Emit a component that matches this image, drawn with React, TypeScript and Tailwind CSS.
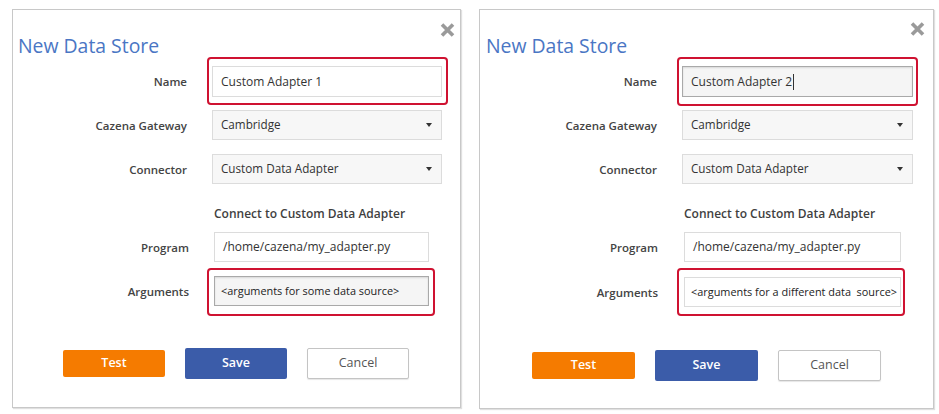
import React from "react";

type Cfg = {
  outer: string;
  titlePl: string;
  labelW: string;
  gap: string;
  inputW: string;
  progLabelW: string;
  progGap: string;
  progInputW: string;
  headingPl: string;
  argsMt: string;
  btnMt: string;
  btnPl: string;
  btnW: string;
  closePos: string;
  nameRed: string;
  argsRed: string;
  nameFocused: boolean;
  argsFocused: boolean;
  name: string;
  args: string;
};

const cfg1: Cfg = {
  outer: "w-[449px] h-[399px]",
  titlePl: "pl-[5px]",
  labelW: "w-[174px]",
  gap: "ml-[25px]",
  inputW: "w-[230px]",
  progLabelW: "w-[176px]",
  progGap: "ml-[25px]",
  progInputW: "w-[215px]",
  headingPl: "pl-[201px]",
  argsMt: "mt-[14px]",
  btnMt: "mt-[42px]",
  btnPl: "pl-[50px]",
  btnW: "w-[102px]",
  closePos: "right-[5px] top-[13px]",
  nameRed: "-left-[5px] -right-[6px] -top-[9px] -bottom-[8px]",
  argsRed: "-left-[7px] -right-[6px] -top-[8px] -bottom-[10px]",
  nameFocused: false,
  argsFocused: true,
  name: "Custom Adapter 1",
  args: "<arguments for some data source>",
};

const cfg2: Cfg = {
  outer: "w-[455px] h-[400px]",
  titlePl: "pl-[6px]",
  labelW: "w-[177px]",
  gap: "ml-[25px]",
  inputW: "w-[231px]",
  progLabelW: "w-[178px]",
  progGap: "ml-[26px]",
  progInputW: "w-[217px]",
  headingPl: "pl-[204px]",
  argsMt: "mt-[15px]",
  btnMt: "mt-[43px]",
  btnPl: "pl-[52px]",
  btnW: "w-[103px]",
  closePos: "right-[8px] top-[12px]",
  nameRed: "-left-[5px] -right-[5px] -top-[9px] -bottom-[9px]",
  argsRed: "-left-[7px] -right-[4px] -top-[9px] -bottom-[9px]",
  nameFocused: true,
  argsFocused: false,
  name: "Custom Adapter 2",
  args: "<arguments for a different data\u00a0 source>",
};

function Caret() {
  return (
    <span className="absolute right-[9px] top-1/2 -translate-y-1/2 w-0 h-0 border-l-[3px] border-r-[3px] border-t-[4px] border-l-transparent border-r-transparent border-t-[#333333]" />
  );
}

function Label({ w, children }: { w: string; children: React.ReactNode }) {
  return (
    <div className={`${w} text-right text-[11.5px] font-semibold text-[#444444] leading-[17px]`}>
      {children}
    </div>
  );
}

function Panel({ c }: { c: Cfg }) {
  const plainInput =
    "h-full w-full flex items-center border border-[#dcdcdc] bg-white text-[12px] text-[#333333]";
  const focusedInput =
    "h-full w-full flex items-center border border-[#a9a9a9] bg-[#f5f5f5] shadow-[inset_0_1px_2px_rgba(0,0,0,0.12)] text-[12px] text-[#333333]";
  const selectBox =
    "relative h-full w-full flex items-center border border-[#dcdcdc] bg-[#f7f7f7] text-[11.7px] text-[#333333] pl-[8px]";
  return (
    <div
      className={`relative ${c.outer} shrink-0 border border-[#c8c8c8] bg-white shadow-[1px_1px_1px_rgba(0,0,0,0.12)] flex flex-col`}
    >
      <div className={`absolute ${c.closePos}`}>
        <svg width="15" height="14" viewBox="0 0 15 14">
          <path d="M2 1.5 L13 12.5 M13 1.5 L2 12.5" stroke="#9a9a9a" strokeWidth="3.6" strokeLinecap="butt" />
        </svg>
      </div>

      <div className={`mt-[22px] ${c.titlePl} text-[19.4px] leading-[28px] text-[#4a76c4]`}>New Data Store</div>

      {/* Name */}
      <div className="mt-[6px] flex items-center h-[31px]">
        <Label w={c.labelW}>Name</Label>
        <div className={`${c.gap} ${c.inputW} h-full relative`}>
          <div className={`${c.nameFocused ? focusedInput : plainInput} pl-[8px]`}>
            <span>{c.name}</span>
            {c.nameFocused && <span className="inline-block w-px h-[16px] bg-[#333333] ml-[1px]" />}
          </div>
          <div className={`absolute ${c.nameRed} border-2 border-[#cf1231] rounded-[4px] pointer-events-none`} />
        </div>
      </div>

      {/* Gateway */}
      <div className="mt-[13px] flex items-center h-[30px]">
        <Label w={c.labelW}>Cazena Gateway</Label>
        <div className={`${c.gap} ${c.inputW} h-full`}>
          <div className={selectBox}>
            Cambridge
            <Caret />
          </div>
        </div>
      </div>

      {/* Connector */}
      <div className="mt-[14px] flex items-center h-[30px]">
        <Label w={c.labelW}>Connector</Label>
        <div className={`${c.gap} ${c.inputW} h-full`}>
          <div className={selectBox}>
            Custom Data Adapter
            <Caret />
          </div>
        </div>
      </div>

      <div className={`mt-[21px] ${c.headingPl} text-[12px] font-semibold leading-[17px] text-[#3f3f3f]`}>
        Connect to Custom Data Adapter
      </div>

      {/* Program */}
      <div className="mt-[10px] flex items-center h-[30px]">
        <Label w={c.progLabelW}>Program</Label>
        <div className={`${c.progGap} ${c.progInputW} h-full`}>
          <div className={`${plainInput} pl-[8px]`}>/home/cazena/my_adapter.py</div>
        </div>
      </div>

      {/* Arguments */}
      <div className={`${c.argsMt} flex items-center h-[30px]`}>
        <Label w={c.progLabelW}>Arguments</Label>
        <div className={`${c.progGap} ${c.progInputW} h-full relative`}>
          <div
            className={`${c.argsFocused ? focusedInput : plainInput} pl-[6px] whitespace-pre overflow-hidden !text-[10.9px] !text-[#222222]`}
          >
            {c.args}
          </div>
          <div className={`absolute ${c.argsRed} border-2 border-[#cf1231] rounded-[4px] pointer-events-none`} />
        </div>
      </div>

      {/* Buttons */}
      <div className={`${c.btnMt} ${c.btnPl} flex items-center gap-[20px] h-[31px]`}>
        <div className={`${c.btnW} h-[27px] rounded-[2px] bg-[#f57b00] text-white text-[12.5px] font-semibold flex items-center justify-center`}>
          Test
        </div>
        <div className={`${c.btnW} h-[31px] rounded-[2px] bg-[#3b5ca9] text-white text-[12.5px] font-semibold flex items-center justify-center`}>
          Save
        </div>
        <div className={`${c.btnW} h-[31px] rounded-[2px] bg-white border border-[#c4c4c4] shadow-[0_1px_1px_rgba(0,0,0,0.1)] text-[#555555] text-[12.5px] flex items-center justify-center`}>
          Cancel
        </div>
      </div>
    </div>
  );
}

export default function App() {
  return (
    <div className="w-[939px] h-[414px] bg-white font-['Open_Sans','Noto_Sans',sans-serif] flex items-start pl-[12px] pt-[9px] gap-[18px]">
      <Panel c={cfg1} />
      <Panel c={cfg2} />
    </div>
  );
}
